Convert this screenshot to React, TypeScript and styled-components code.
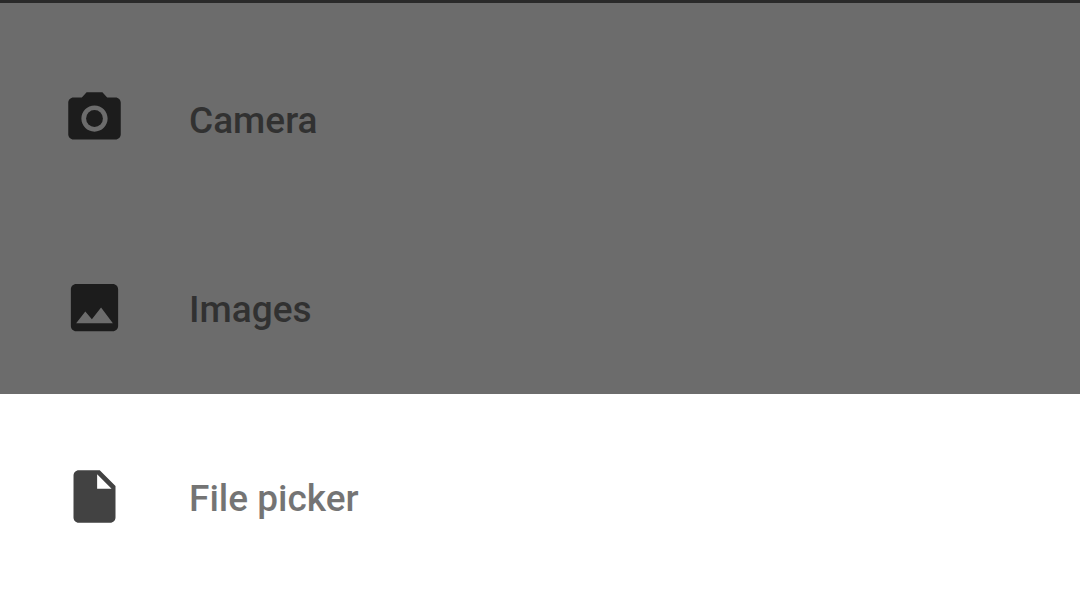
import React from "react";
import styled, { createGlobalStyle } from "styled-components";

const GlobalStyle = createGlobalStyle`
  * { box-sizing: border-box; }
  body {
    margin: 0;
    background: #ffffff;
    font-family: Roboto, sans-serif;
  }
`;

const Sheet = styled.main`
  display: flex;
  flex-direction: column;
  width: 100%;
  min-height: 100vh;
  background: #ffffff;
`;

const Dimmed = styled.div`
  display: flex;
  flex-direction: column;
  gap: 16px;
  border-top: 3px solid #2a2a2a;
  padding-top: 29px;
  background: #6c6c6c;
`;

const Option = styled.button<{ $dimmed?: boolean }>`
  display: flex;
  align-items: center;
  gap: 63px;
  width: 100%;
  height: ${(p) => (p.$dimmed ? 173 : 205)}px;
  padding: 0 63px;
  border: 0;
  background: transparent;
  color: #000000;
  font: 500 37px/44px Roboto, sans-serif;
  text-align: left;
  cursor: pointer;
`;

const Icon = styled.svg<{ $dimmed?: boolean }>`
  flex: none;
  width: 63px;
  height: 63px;
  fill: ${(p) => (p.$dimmed ? "#1c1c1c" : "#424242")};
`;

const Label = styled.span`
  padding-top: 5px;
  opacity: 0.54;
`;

export default function App() {
  return (
    <>
      <GlobalStyle />
      <Sheet>
        <Dimmed>
          <Option type="button" $dimmed>
            <Icon $dimmed viewBox="0 0 24 24" aria-hidden="true">
              <circle cx="12" cy="12" r="3.2" />
              <path d="M9 2 7.17 4H4c-1.1 0-2 .9-2 2v12c0 1.1.9 2 2 2h16c1.1 0 2-.9 2-2V6c0-1.1-.9-2-2-2h-3.17L15 2H9zm3 15c-2.76 0-5-2.24-5-5s2.24-5 5-5 5 2.24 5 5-2.24 5-5 5z" />
            </Icon>
            <Label>Camera</Label>
          </Option>
          <Option type="button" $dimmed>
            <Icon $dimmed viewBox="0 0 24 24" aria-hidden="true">
              <path d="M21 19V5c0-1.1-.9-2-2-2H5c-1.1 0-2 .9-2 2v14c0 1.1.9 2 2 2h14c1.1 0 2-.9 2-2zM8.5 13.5l2.5 3.01L14.5 12l4.5 6H5l3.500-4.500z" />
            </Icon>
            <Label>Images</Label>
          </Option>
        </Dimmed>
        <Option type="button">
          <Icon viewBox="0 0 24 24" aria-hidden="true">
            <path d="M6 2c-1.1 0-1.99.9-1.99 2L4 20c0 1.1.89 2 1.99 2H18c1.1 0 2-.9 2-2V8l-6-6H6zm7 7V3.5L18.5 9H13z" />
          </Icon>
          <Label>File picker</Label>
        </Option>
      </Sheet>
    </>
  );
}
